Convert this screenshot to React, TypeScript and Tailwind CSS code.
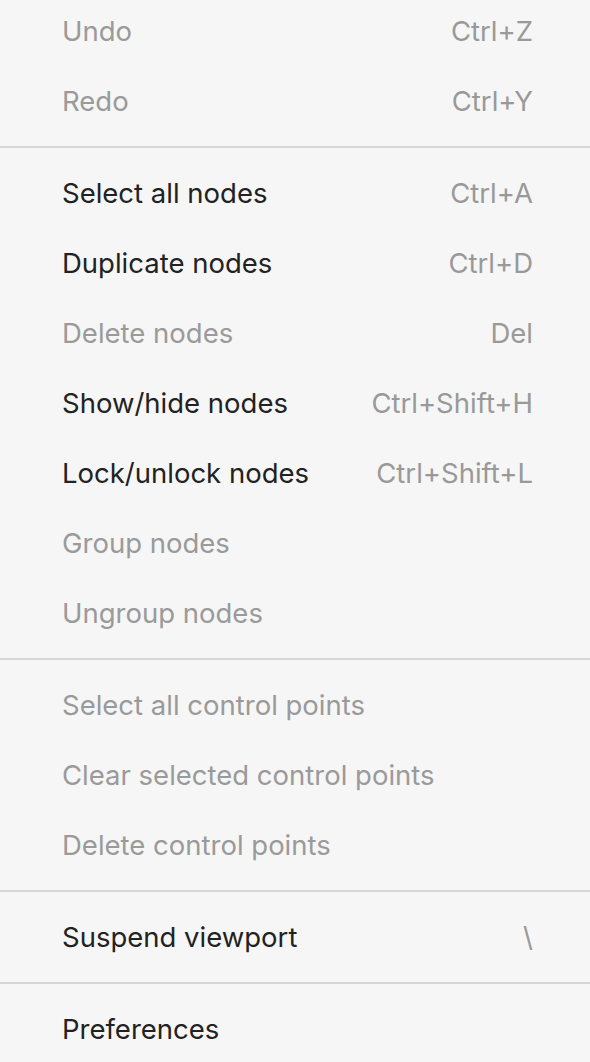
import React from 'react';

type Item = { label: string; shortcut?: string; disabled?: boolean };

const groups: Item[][] = [
    [
        { label: 'Undo', shortcut: 'Ctrl+Z', disabled: true },
        { label: 'Redo', shortcut: 'Ctrl+Y', disabled: true },
    ],
    [
        { label: 'Select all nodes', shortcut: 'Ctrl+A' },
        { label: 'Duplicate nodes', shortcut: 'Ctrl+D' },
        { label: 'Delete nodes', shortcut: 'Del', disabled: true },
        { label: 'Show/hide nodes', shortcut: 'Ctrl+Shift+H' },
        { label: 'Lock/unlock nodes', shortcut: 'Ctrl+Shift+L' },
        { label: 'Group nodes', disabled: true },
        { label: 'Ungroup nodes', disabled: true },
    ],
    [
        { label: 'Select all control points', disabled: true },
        { label: 'Clear selected control points', disabled: true },
        { label: 'Delete control points', disabled: true },
    ],
    [{ label: 'Suspend viewport', shortcut: '\\' }],
    [{ label: 'Preferences' }],
];

const MenuRow: React.FC<{ item: Item }> = ({ item }) => (
    <div className="flex h-[70px] items-center justify-between pt-[2px] pl-[62px] pr-[57px]">
        <span className={item.disabled ? 'text-[#9a9a9a]' : 'text-[#222222]'}>{item.label}</span>
        {item.shortcut && <span className="text-[#999999]">{item.shortcut}</span>}
    </div>
);

export default function App() {
    return (
        <div className="h-[1062px] w-[590px] overflow-hidden bg-[#f6f6f6] font-['Inter',sans-serif] text-[27.5px]">
            <div className="-mt-[4px]">
                {groups.map((group, gi) => (
                    <div key={gi}>
                        {gi > 0 && <div className="my-[10px] h-[2px] bg-[#d6d6d6]" />}
                        {group.map((item) => (
                            <MenuRow key={item.label} item={item} />
                        ))}
                    </div>
                ))}
            </div>
        </div>
    );
}
